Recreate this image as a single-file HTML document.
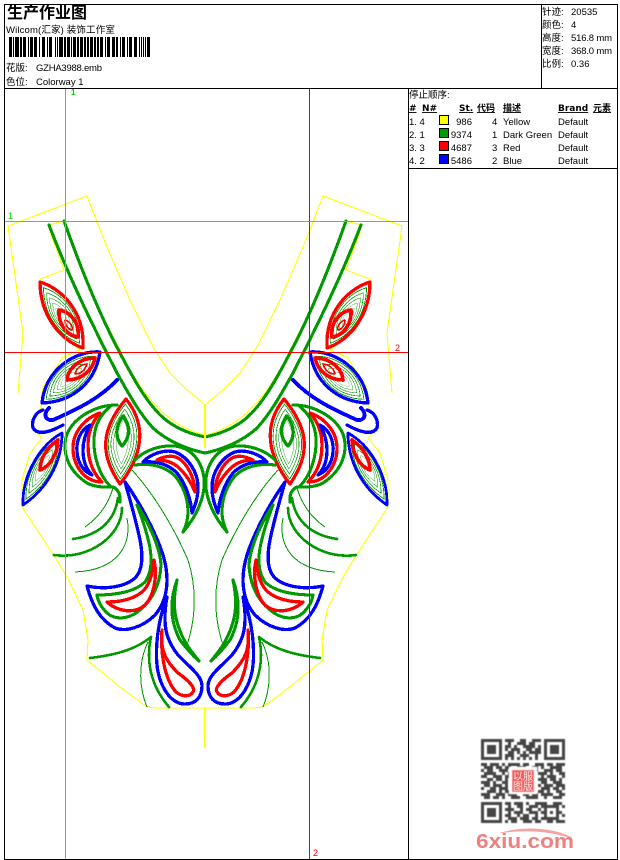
<!DOCTYPE html>
<html><head><meta charset="utf-8">
<style>
html,body{margin:0;padding:0;background:#fff}
svg{display:block}
text{font-family:"Liberation Sans","Noto Sans CJK SC",sans-serif;font-size:9.5px;fill:#000}
.h{font-family:"DejaVu Sans","Noto Sans CJK SC",sans-serif;font-size:9px;font-weight:bold;text-decoration:underline}
.gt{stroke:#090;stroke-width:3.1;fill:none;stroke-linejoin:round;stroke-linecap:round}
.th{stroke:#090;stroke-width:1;fill:none}
.bl{stroke:#00f;stroke-width:3.3;fill:none;stroke-linejoin:round;stroke-linecap:round}
.rd{stroke:#f00;stroke-width:3.3;fill:none;stroke-linejoin:round;stroke-linecap:round}
.yl{stroke:#ff0;stroke-width:1.1;fill:none;stroke-linejoin:round}
.ln{stroke:#090;stroke-width:1;fill:none}
</style></head><body>
<svg xmlns="http://www.w3.org/2000/svg" width="620" height="860" viewBox="0 0 620 860">
<rect width="620" height="860" fill="#fff"/>

<defs>
<path id="l1" d="M40 282C60 288 85 310 83 348C60 340 40 315 40 282Z"/>
<path id="l2" d="M100 352C75 350 45 370 42 403C70 402 95 385 100 352Z"/>
<path id="l3" d="M62 433C40 445 22 475 23 505C45 490 62 465 62 433Z"/>
<path id="l4" d="M126 399C100 430 100 455 120 484C143 455 147 425 126 399Z"/>
<g id="half" shape-rendering="crispEdges">
  <!-- yellow outline -->
  <path class="yl" d="M18 393L23 333L8 226L87 196L97 222L107 247L130 300L153 347L170 373L187 390L204 404"/>
  <path class="yl" d="M48 225L64 221M50 232L64 270L40 279L39 287L43 307L55 330L80 350L63 357L43 387L41 408L33 417L33 428L42 438L30 453L22 480L22 507L43 539L60 565L70 583L83 610L88 640L87 660L120 687L147 707L157 708L205 708"/>
  <path class="yl" d="M65 221C86 280 106 325 121 352C136 384 161 424 204 435"/>
  <!-- neck -->
  <path class="gt" d="M64 221C85 280 105 325 120 353C133 378 150 410 170 423C182 431 195 435 205 437"/>
  <path class="gt" d="M49 225C70 280 95 330 117 373C125 387 138 412 153 428C168 442 190 450 205 453"/>
  <!-- leaf 1 -->
  <g class="ln">
    <use href="#l1" transform="translate(62 318) scale(.84) translate(-62 -318)"/>
    <use href="#l1" transform="translate(62 318) scale(.7) translate(-62 -318)"/>
    <use href="#l1" transform="translate(62 318) scale(.56) translate(-62 -318)"/>
    <use href="#l1" transform="translate(62 318) scale(.42) translate(-62 -318)"/>
    <use href="#l1" transform="translate(62 318) scale(.28) translate(-62 -318)"/>
  </g>
  <use href="#l1" class="rd"/>
  <path class="rd" style="stroke-width:3.6" d="M59 310C72 312 80 325 78 337C65 335 58 322 59 310Z"/>
  <path class="rd" style="stroke-width:1.6" d="M65 320C71 322 73 327 72 330C67 329 65 324 65 320Z"/>
  <!-- leaf 2 -->
  <g class="ln">
    <use href="#l2" transform="translate(68 380) scale(.84) translate(-68 -380)"/>
    <use href="#l2" transform="translate(68 380) scale(.7) translate(-68 -380)"/>
    <use href="#l2" transform="translate(68 380) scale(.56) translate(-68 -380)"/>
    <use href="#l2" transform="translate(68 380) scale(.42) translate(-68 -380)"/>
    <use href="#l2" transform="translate(68 380) scale(.28) translate(-68 -380)"/>
  </g>
  <use href="#l2" class="bl"/>
  <path class="rd" style="stroke-width:3.6" d="M95 358C80 358 68 368 67 380C80 380 92 372 95 358Z"/>
  <path class="rd" style="stroke-width:1.6" d="M87 364C80 365 76 369 75 374C81 374 85 370 87 364Z"/>
  <!-- swoosh -->
  <path class="bl" style="stroke-width:3.8" d="M117 380C100 398 80 408 53 420C45 421 43 414 49 408"/>
  <path class="bl" d="M63 425C50 432 38 436 33 428C31 420 36 412 43 410"/>
  <!-- leaf 3 -->
  <g class="ln">
    <use href="#l3" transform="translate(42 468) scale(.84) translate(-42 -468)"/>
    <use href="#l3" transform="translate(42 468) scale(.68) translate(-42 -468)"/>
    <use href="#l3" transform="translate(42 468) scale(.52) translate(-42 -468)"/>
    <use href="#l3" transform="translate(42 468) scale(.36) translate(-42 -468)"/>
  </g>
  <use href="#l3" class="bl" style="stroke-width:2.8"/>
  <path class="rd" style="stroke-width:3.6" d="M58 440C46 448 40 460 40 470C51 466 58 452 58 440Z"/>
  <!-- side paisley -->
  <path class="gt" d="M117 405C95 405 72 418 66 437C62 455 70 472 87 483C96 488 108 487 113 487C118 489 121 495 120 502"/>
  <path class="gt" d="M112 405C100 414 95 425 94 438C93 455 99 475 110 486"/>
  <path class="rd" d="M100 413C85 418 73 432 73 448C73 465 84 482 102 482"/>
  <path class="rd" d="M100 413C92 422 88 432 88 445C88 460 93 473 102 482"/>
  <path class="bl" d="M90 425C80 430 76 442 77 452C78 465 85 472 92 475"/>
  <path class="bl" d="M90 425C85 434 83 442 83 450C83 462 87 470 92 475"/>
  <!-- central leaf -->
  <g class="ln">
    <use href="#l4" transform="translate(122 442) scale(.84 .88) translate(-122 -442)"/>
    <use href="#l4" transform="translate(122 442) scale(.68 .76) translate(-122 -442)"/>
    <use href="#l4" transform="translate(122 442) scale(.52 .64) translate(-122 -442)"/>
    <use href="#l4" transform="translate(122 442) scale(.36 .52) translate(-122 -442)"/>
  </g>
  <use href="#l4" class="rd"/>
  <path class="gt" style="stroke-width:3.4" d="M123 416C115 426 115 438 122 446C130 438 131 426 123 416Z"/>
  <!-- peacock -->
  <path class="gt" d="M135 460C145 450 160 445 175 446C192 448 202 462 204 478C206 498 195 518 183 532"/>
  <path class="gt" d="M135 465C150 463 165 466 175 476C184 487 188 500 188 512C188 520 186 526 183 532"/>
  <path class="bl" d="M143 462C150 454 165 449 175 452C188 457 198 472 198 487C198 498 195 506 192 513"/>
  <path class="bl" d="M143 462C155 461 167 463 177 473C186 484 191 500 192 513"/>
  <path class="rd" d="M157 460C165 456 172 455 178 458C187 463 195 478 195 492"/>
  <path class="rd" d="M157 460C165 460 172 462 178 467C186 474 192 484 195 492"/>
  <!-- big blue -->
  <path class="bl" d="M125 482C138 500 155 530 163 555C170 578 168 600 155 615C142 628 125 632 115 628C100 620 92 605 87 586C105 590 125 587 135 578C143 570 143 555 140 540C136 520 130 500 125 482Z"/>
  <!-- green inner -->
  <path class="gt" d="M137 505C150 525 160 548 161 565C160 585 152 600 140 610C128 620 115 620 107 613C102 608 98 602 97 595C115 595 135 592 145 582C152 572 152 560 150 548C147 532 142 518 137 505Z"/>
  <!-- red -->
  <path class="rd" d="M107 602C118 612 135 614 145 605C153 597 158 578 154 560C153 572 150 585 142 592C132 600 118 602 107 602Z"/>
  <!-- teardrop -->
  <path class="bl" d="M167 597C162 625 166 640 178 655C188 666 202 675 202 686C202 698 195 704 185 704C172 704 162 690 158 672C154 650 158 620 167 597Z"/>
  <path class="rd" d="M162 630C160 650 165 660 178 673C188 680 196 688 193 692C190 697 182 697 176 692C167 682 160 660 162 630Z"/>
  <!-- leaf green bottom -->
  <path class="gt" d="M177 580C168 605 172 625 180 640C186 648 192 655 199 661C190 650 182 640 177 622C173 608 174 595 177 580Z"/>
  <path class="gt" style="stroke-width:2.6" d="M90 658C115 655 135 650 151 637"/>
  <path class="gt" style="stroke-width:2.6" d="M151 637C146 660 150 685 169 707"/>
  <path class="th" d="M147 707C140 690 137 665 148 642"/>
  <path class="th" d="M132 470C155 495 175 530 188 560C196 585 197 615 187 645"/>
  <!-- arcs -->
  <path class="th" d="M113 488C108 505 98 518 85 527"/>
  <path class="gt" style="stroke-width:2.6" d="M118 498C115 520 100 535 73 539"/>
  <path class="gt" style="stroke-width:2.6" d="M122 508C122 535 90 560 54 555"/>
  <path class="th" d="M127 518C132 545 118 570 75 572"/>
</g>
</defs>

<use href="#half"/>
<use href="#half" transform="translate(410 0) scale(-1 1)"/>

<!-- center markers -->
<rect x="204" y="404" width="2" height="44" fill="#ff0"/>
<rect x="204" y="708" width="1.5" height="40" fill="#ff0"/>

<!-- guides -->
<g shape-rendering="crispEdges">
<rect x="65" y="88" width="1" height="771" fill="#0f0"/>
<rect x="309" y="88" width="1" height="771" fill="#e00"/>
<rect x="4" y="221" width="404" height="1" fill="#0f0"/>
<rect x="4" y="352" width="404" height="1" fill="#f00"/>
</g>

<!-- frame -->
<g fill="none" stroke="#000" shape-rendering="crispEdges">
<rect x="4.5" y="4.5" width="613" height="855" stroke-width="1"/>
<path d="M4 88.5H618M541.5 4V88M408.5 88V859M408 168.5H618"/>
</g>

<text x="71" y="95" style="fill:#00d000;font-size:8px;font-weight:bold">1</text>
<text x="8" y="219" style="fill:#00d000;font-size:9px">1</text>
<text x="395" y="351" style="fill:#e00;font-size:9px">2</text>
<text x="313" y="856" style="fill:#e00;font-size:9px">2</text>

<!-- header left -->
<text x="7" y="18" style="font-size:16px;font-weight:bold">生产作业图</text>
<text x="6" y="33" style="font-size:9.5px;letter-spacing:.15px">Wilcom(汇家) 装饰工作室</text>
<path fill="#000" shape-rendering="crispEdges" d="M9 37h3v20H9zM13 37h1v20h-1zM15 37h4v20h-4zM20 37h2v20h-2zM23 37h3v20h-3zM28 37h1v20h-1zM30 37h3v20h-3zM34 37h3v20h-3zM39 37h1v20h-1zM42 37h3v20h-3zM47 37h1v20h-1zM49 37h3v20h-3zM55 37h1v20h-1zM57 37h1v20h-1zM59 37h4v20h-4zM64 37h2v20h-2zM67 37h3v20h-3zM71 37h1v20h-1zM73 37h3v20h-3zM77 37h2v20h-2zM80 37h3v20h-3zM84 37h2v20h-2zM87 37h2v20h-2zM90 37h3v20h-3zM94 37h2v20h-2zM97 37h2v20h-2zM100 37h3v20h-3zM105 37h1v20h-1zM107 37h3v20h-3zM112 37h3v20h-3zM116 37h2v20h-2zM120 37h1v20h-1zM122 37h3v20h-3zM127 37h1v20h-1zM129 37h3v20h-3zM134 37h3v20h-3zM139 37h1v20h-1zM141 37h1v20h-1zM143 37h1v20h-1zM145 37h1v20h-1zM147 37h3v20h-3z"/>
<text x="6" y="71">花版:</text><text x="36" y="71" textLength="66">GZHA3988.emb</text>
<text x="6" y="85">色位:</text><text x="36" y="85">Colorway 1</text>

<!-- header right -->
<text x="542" y="15">针迹:</text><text x="571" y="15">20535</text>
<text x="542" y="28">颜色:</text><text x="571" y="28">4</text>
<text x="542" y="41">高度:</text><text x="571" y="41" textLength="41">516.8 mm</text>
<text x="542" y="54">宽度:</text><text x="571" y="54" textLength="41">368.0 mm</text>
<text x="542" y="67">比例:</text><text x="571" y="67">0.36</text>

<!-- stop sequence -->
<text x="409" y="98">停止顺序:</text>
<text class="h" x="409" y="111">#</text>
<text class="h" x="422" y="111">N#</text>
<text class="h" x="459" y="111">St.</text>
<text class="h" x="477" y="111">代码</text>
<text class="h" x="503" y="111">描述</text>
<text class="h" x="558" y="111">Brand</text>
<text class="h" x="593" y="111">元素</text>

<g stroke="#000" shape-rendering="crispEdges">
<rect x="439.5" y="115.5" width="9" height="9" fill="#ff0"/>
<rect x="439.5" y="128.5" width="9" height="9" fill="#090"/>
<rect x="439.5" y="141.5" width="9" height="9" fill="#f00"/>
<rect x="439.5" y="154.5" width="9" height="9" fill="#00f"/>
</g>
<text x="409" y="125">1. 4</text><text x="472" y="125" text-anchor="end">986</text><text x="492" y="125">4</text><text x="503" y="125">Yellow</text><text x="558" y="125">Default</text>
<text x="409" y="138">2. 1</text><text x="472" y="138" text-anchor="end">9374</text><text x="492" y="138">1</text><text x="503" y="138">Dark Green</text><text x="558" y="138">Default</text>
<text x="409" y="151">3. 3</text><text x="472" y="151" text-anchor="end">4687</text><text x="492" y="151">3</text><text x="503" y="151">Red</text><text x="558" y="151">Default</text>
<text x="409" y="164">4. 2</text><text x="472" y="164" text-anchor="end">5486</text><text x="492" y="164">2</text><text x="503" y="164">Blue</text><text x="558" y="164">Default</text>

<!-- QR -->
<filter id="qb"><feGaussianBlur stdDeviation=".45"/></filter>
<g filter="url(#qb)">
<g transform="translate(481 739) scale(3)" fill="none" stroke="#444" stroke-width="1">
<path d="M.5 .5h6v6h-6zM21.5 .5h6v6h-6zM.5 21.5h6v6h-6z"/>
<path fill="#444" stroke="none" d="M2 2h3v3H2zM23 2h3v3h-3zM2 23h3v3H2z"/>
<path d="M8 .5h3M13 .5h2M17 .5h3M9 1.5h1M12 1.5h3M16 1.5h2M8 2.5h2M11 2.5h1M14 2.5h4M19 2.5h1M8 3.5h1M10 3.5h3M15 3.5h2M18 3.5h2M9 4.5h2M12 4.5h1M14 4.5h1M16 4.5h4M8 5.5h3M13 5.5h3M18 5.5h1M8 6.5h1M10 6.5h1M12 6.5h1M14 6.5h1M16 6.5h1M18 6.5h1
M0 8.5h2M3 8.5h3M7 8.5h1M9 8.5h4M14 8.5h2M18 8.5h3M22 8.5h2M25 8.5h3M1 9.5h3M5 9.5h2M8 9.5h2M12 9.5h3M17 9.5h2M20 9.5h1M23 9.5h4M0 10.5h1M2 10.5h2M6 10.5h3M10 10.5h2M14 10.5h1M16 10.5h3M21 10.5h3M25 10.5h2M1 11.5h4M7 11.5h1M9 11.5h2M19 11.5h3M23 11.5h1M26 11.5h2M0 12.5h2M4 12.5h3M8 12.5h2M20 12.5h1M22 12.5h3M27 12.5h1M2 13.5h2M5 13.5h2M8 13.5h1M19 13.5h3M23 13.5h2M26 13.5h1M0 14.5h3M4 14.5h1M7 14.5h2M20 14.5h2M24 14.5h3M1 15.5h2M4 15.5h3M8 15.5h1M19 15.5h1M21 15.5h3M25 15.5h3M0 16.5h1M3 16.5h2M6 16.5h3M20 16.5h3M24 16.5h2M27 16.5h1M2 17.5h3M6 17.5h1M8 17.5h2M19 17.5h2M22 17.5h1M25 17.5h2M0 18.5h3M5 18.5h3M9 18.5h3M14 18.5h2M17 18.5h2M20 18.5h4M26 18.5h2M1 19.5h2M4 19.5h2M7 19.5h1M10 19.5h3M15 19.5h4M21 19.5h1M24 19.5h3
M8 21.5h2M11 21.5h3M15 21.5h1M18 21.5h4M24 21.5h3M9 22.5h1M12 22.5h2M16 22.5h3M20 22.5h6M27 22.5h1M8 23.5h3M13 23.5h1M15 23.5h2M19 23.5h1M21 23.5h1M25 23.5h1M9 24.5h1M11 24.5h3M16 24.5h3M20 24.5h2M23 24.5h1M25 24.5h2M8 25.5h2M12 25.5h1M14 25.5h2M18 25.5h1M21 25.5h1M25 25.5h1M27 25.5h1M9 26.5h3M13 26.5h3M17 26.5h2M20 26.5h6M8 27.5h1M10 27.5h2M14 27.5h3M18 27.5h2M22 27.5h2M25 27.5h3"/>
</g>
<rect x="509" y="767" width="28" height="27" fill="#fff"/>
<rect x="512" y="770" width="22" height="22" fill="#f0605f"/>
</g>
<text x="513" y="780" style="font-size:10px;fill:#ffe5e5">以</text><text x="523" y="780" style="font-size:10px;fill:#ffe5e5">服</text>
<text x="513" y="790" style="font-size:10px;fill:#ffe5e5">图</text><text x="523" y="790" style="font-size:10px;fill:#ffe5e5">版</text>

<!-- watermark -->
<path d="M500 833C525 826 555 828 572 838L560 835C540 830 520 830 500 833Z" fill="#f3a3a3" stroke="#f3a3a3" stroke-width=".6"/>
<text x="476" y="848" textLength="98" lengthAdjust="spacingAndGlyphs" style="font-size:20px;font-weight:bold;fill:#ee8080">6xiu.com</text>
</svg>
</body></html>
